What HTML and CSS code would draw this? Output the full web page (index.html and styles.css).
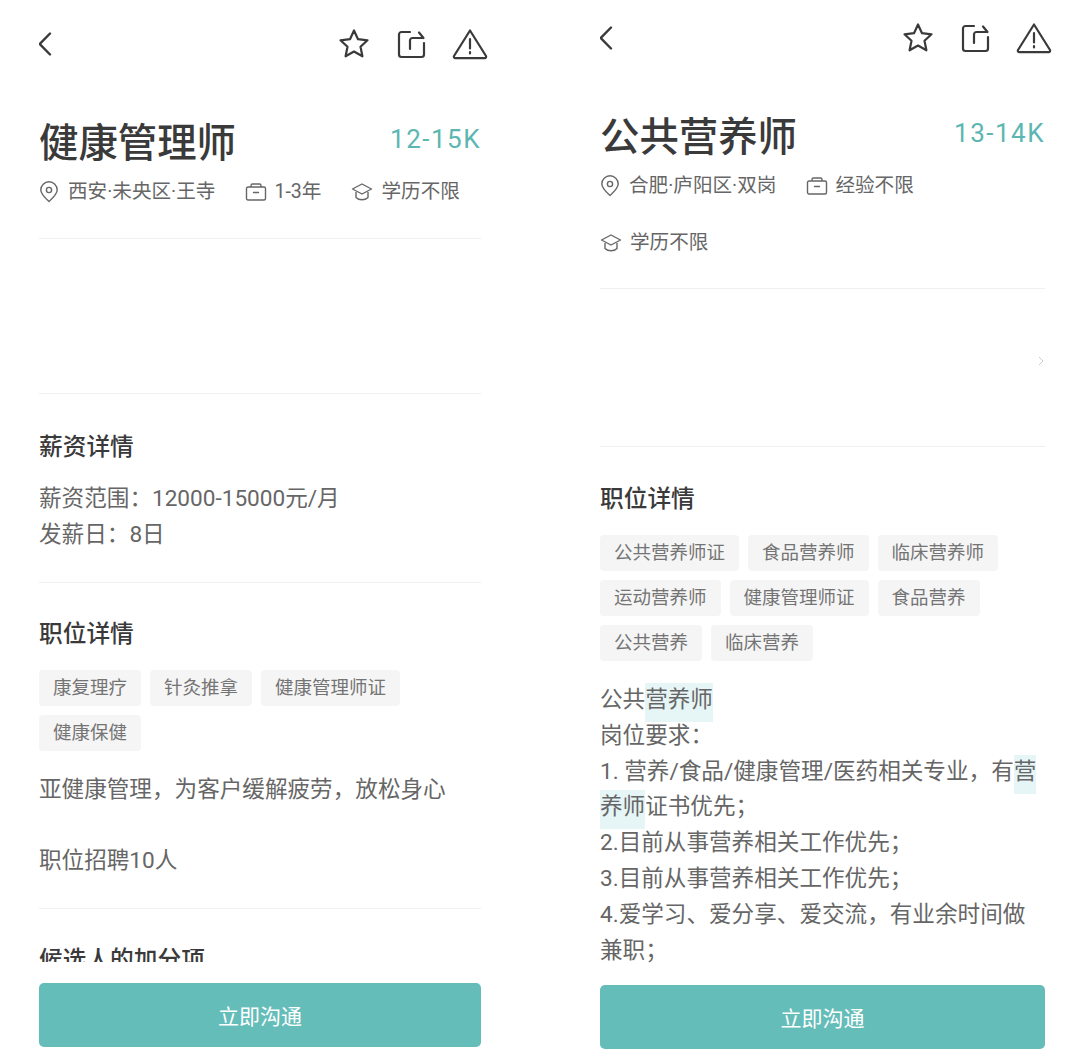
FILE: index.html
```html
<!DOCTYPE html>
<html lang="zh-CN">
<head>
  <meta charset="UTF-8" />
  <title>职位详情</title>
  <link rel="stylesheet" href="styles.css">
</head>
<body>
  <svg class="sprite" width="0" height="0" aria-hidden="true">
    <symbol id="i-back" viewBox="0 0 16 26"><path d="M13 2.500 2.800 13 13 23.500" fill="none" stroke="currentColor" stroke-width="2.400" stroke-linecap="round" stroke-linejoin="round"/></symbol>
    <symbol id="i-star" viewBox="0 0 32 32"><path d="M16 2.500 20 11.200 29.500 12.300 22.500 18.800 24.400 28.300 16 23.500 7.600 28.300 9.500 18.800 2.500 12.300 12 11.200Z" fill="none" stroke="currentColor" stroke-width="2.200" stroke-linejoin="round"/></symbol>
    <symbol id="i-share" viewBox="0 0 30 30"><path d="M14 3H5.500A2.500 2.500 0 0 0 3 5.500v20A2.500 2.500 0 0 0 5.500 28h20a2.500 2.500 0 0 0 2.500-2.500V14M14 20v-8.500A2.500 2.500 0 0 1 16.500 9H27M23 3.500 27.500 9" fill="none" stroke="currentColor" stroke-width="2.200" stroke-linecap="round" stroke-linejoin="round"/></symbol>
    <symbol id="i-warn" viewBox="0 0 36 32"><path d="M18 2.500 34 28a1.500 1.500 0 0 1-1.300 2.200H3.300A1.500 1.500 0 0 1 2 28ZM18 11v9.500M18 24v1.500" fill="none" stroke="currentColor" stroke-width="2.200" stroke-linecap="round" stroke-linejoin="round"/></symbol>
    <symbol id="i-pin" viewBox="0 0 20 22"><path d="M10 20.500C5 16 1.800 12.800 1.800 9a8.200 8.200 0 0 1 16.400 0c0 3.800-3.200 7-8.200 11.500Z" fill="none" stroke="currentColor" stroke-width="1.400" stroke-linejoin="round"/><circle cx="10" cy="9" r="2.600" fill="none" stroke="currentColor" stroke-width="1.400"/></symbol>
    <symbol id="i-bag" viewBox="0 0 22 20"><path d="M6 5V3.500A1.500 1.500 0 0 1 7.500 2h7A1.500 1.500 0 0 1 16 3.500V5M3 5h16a1.500 1.500 0 0 1 1.500 1.500v10A1.500 1.500 0 0 1 19 18H3a1.500 1.500 0 0 1-1.500-1.500v-10A1.500 1.500 0 0 1 3 5ZM8.500 10.500h5" fill="none" stroke="currentColor" stroke-width="1.400" stroke-linecap="round"/></symbol>
    <symbol id="i-cap" viewBox="0 0 22 20"><path d="M11 2 20.500 7 11 12 1.500 7ZM5 10v5.500c1.500 1.500 3.500 2.300 6 2.300s4.500-.8 6-2.300V10" fill="none" stroke="currentColor" stroke-width="1.400" stroke-linejoin="round"/></symbol>
  </svg>

  <div class="screens">
    <section class="phone phone-left">
      <div class="content">
        <nav class="topbar">
          <svg class="icon-back"><use href="#i-back"/></svg>
          <div class="actions">
            <svg class="icon-star"><use href="#i-star"/></svg>
            <svg class="icon-share"><use href="#i-share"/></svg>
            <svg class="icon-warn"><use href="#i-warn"/></svg>
          </div>
        </nav>
        <div class="job-head">
          <h1>健康管理师</h1>
          <span class="salary">12-15K</span>
        </div>
        <div class="meta">
          <span class="meta-item"><svg class="icon-pin"><use href="#i-pin"/></svg>西安·未央区·王寺</span>
          <span class="meta-item"><svg class="icon-bag"><use href="#i-bag"/></svg>1-3年</span>
          <span class="meta-item"><svg class="icon-cap"><use href="#i-cap"/></svg>学历不限</span>
        </div>
        <div class="blank blank-left"></div>
        <div class="block">
          <h2>薪资详情</h2>
          <p class="text">薪资范围<span class="punct">：</span>12000-15000元/月<br>发薪日<span class="punct">：</span>8日</p>
        </div>
        <div class="block">
          <h2>职位详情</h2>
          <div class="tags">
            <span class="tag">康复理疗</span>
            <span class="tag">针灸推拿</span>
            <span class="tag">健康管理师证</span>
            <span class="tag">健康保健</span>
          </div>
          <p class="text">亚健康管理，为客户缓解疲劳，放松身心<br><br>职位招聘10人</p>
        </div>
        <div class="block">
          <h2>候选人的加分项</h2>
        </div>
      </div>
      <button class="chat-btn" type="button">立即沟通</button>
    </section>

    <section class="phone phone-right">
      <div class="content">
        <nav class="topbar">
          <svg class="icon-back"><use href="#i-back"/></svg>
          <div class="actions">
            <svg class="icon-star"><use href="#i-star"/></svg>
            <svg class="icon-share"><use href="#i-share"/></svg>
            <svg class="icon-warn"><use href="#i-warn"/></svg>
          </div>
        </nav>
        <div class="job-head">
          <h1>公共营养师</h1>
          <span class="salary">13-14K</span>
        </div>
        <div class="meta">
          <span class="meta-item"><svg class="icon-pin"><use href="#i-pin"/></svg>合肥·庐阳区·双岗</span>
          <span class="meta-item"><svg class="icon-bag"><use href="#i-bag"/></svg>经验不限</span>
          <span class="meta-item"><svg class="icon-cap"><use href="#i-cap"/></svg>学历不限</span>
        </div>
        <div class="blank blank-right">
          <svg class="chevron" viewBox="0 0 6 10"><path d="M1 1 5 5 1 9" fill="none" stroke="currentColor" stroke-width="1"/></svg>
        </div>
        <div class="block">
          <h2>职位详情</h2>
          <div class="tags">
            <span class="tag">公共营养师证</span>
            <span class="tag">食品营养师</span>
            <span class="tag">临床营养师</span>
            <span class="tag">运动营养师</span>
            <span class="tag">健康管理师证</span>
            <span class="tag">食品营养</span>
            <span class="tag">公共营养</span>
            <span class="tag">临床营养</span>
          </div>
          <p class="text">公共<span class="mark">营养师</span><br>岗位要求<span class="punct">：</span><br>1. 营养/食品/健康管理/医药相关专业，有<span class="mark">营养师</span>证书优先<span class="punct">；</span><br>2.目前从事营养相关工作优先<span class="punct">；</span><br>3.目前从事营养相关工作优先<span class="punct">；</span><br>4.爱学习、爱分享、爱交流，有业余时间做兼职<span class="punct">；</span></p>
        </div>
      </div>
      <button class="chat-btn" type="button">立即沟通</button>
    </section>
  </div>
</body>
</html>
```

FILE: styles.css
```css
:root {
  --teal: #65bdb9;
  --teal-text: #5cb6b1;
  --ink: #383838;
  --gray: #666;
  --line: #f0f0f0;
}

* {
  box-sizing: border-box;
}

html, body {
  height: 100%;
}

body {
  margin: 0;
  overflow: hidden;
  background: #fff;
  color: var(--ink);
  font-family: "Roboto", "Noto Sans CJK SC", sans-serif;
}

.sprite {
  display: block;
  height: 0;
}

.screens {
  display: grid;
  grid-template-columns: 540px 540px;
  height: 1064px;
}

.phone {
  display: flex;
  flex-direction: column;
  height: 1064px;
}

.phone-left {
  padding: 27px 59px 17px 39px;
}

.phone-right {
  padding: 21px 35px 15px 60px;
}

/* the warning icon hangs past the text column, so leave it room inside the clip */
.content {
  flex: 1;
  min-height: 0;
  margin-right: -8px;
  padding-right: 8px;
  overflow: hidden;
}

/* top icons */
.topbar {
  display: flex;
  justify-content: space-between;
  align-items: center;
  height: 34px;
  color: #3a3a3a;
}

.actions {
  display: flex;
  align-items: center;
  gap: 26px;
  margin-right: -7px;
}

.icon-back {
  width: 16px;
  height: 26px;
  margin-left: -2px;
}

.icon-star {
  width: 32px;
  height: 32px;
}

.icon-share {
  width: 30px;
  height: 30px;
}

.icon-warn {
  width: 36px;
  height: 32px;
}

/* title row */
.job-head {
  display: flex;
  justify-content: space-between;
  align-items: flex-start;
  margin-top: 55px;
}

h1 {
  margin: 0;
  font-size: 39.400px;
  font-weight: 500;
  line-height: 56px;
  color: #3a3a3a;
}

.salary {
  margin-top: 6px;
  font-size: 26px;
  line-height: 34px;
  letter-spacing: 1.500px;
  color: var(--teal-text);
}

.meta {
  display: flex;
  flex-wrap: wrap;
  column-gap: 30px;
  row-gap: 21px;
  margin-top: 2px;
  padding-bottom: 28px;
  border-bottom: 1px solid var(--line);
  font-size: 19.600px;
  line-height: 36px;
  color: var(--gray);
}

.phone-right .meta {
  padding-bottom: 27px;
}

.meta-item {
  display: flex;
  align-items: center;
  gap: 8px;
}

.meta-item:nth-child(1) {
  gap: 9px;
}

.meta-item:nth-child(2) {
  gap: 7px;
}

.icon-pin {
  width: 20px;
  height: 22px;
}

.icon-bag,
.icon-cap {
  width: 22px;
  height: 20px;
}

.blank {
  display: flex;
  justify-content: flex-end;
  align-items: center;
  border-bottom: 1px solid var(--line);
}

.blank-left {
  height: 155px;
}

.blank-right {
  height: 158px;
}

.chevron {
  width: 6px;
  height: 10px;
  margin-right: 1px;
  margin-bottom: 14px;
  color: #ccc;
}

/* sections */
.block {
  padding-top: 33px;
  padding-bottom: 29px;
  border-bottom: 1px solid var(--line);
}

.blank-left + .block {
  padding-top: 35px;
}

.blank-right + .block {
  padding-top: 34px;
}

h2 {
  margin: 0;
  font-size: 23.700px;
  font-weight: 500;
  line-height: 36px;
  color: #3a3a3a;
}

.text {
  margin: 16px 0 0;
  font-size: 22.600px;
  line-height: 35.800px;
  color: var(--gray);
}

/* colon and semicolon sit centred in the cell in the original */
.punct {
  font-family: "Noto Sans CJK JP", sans-serif;
  line-height: 1;
}

.tags {
  display: flex;
  flex-wrap: wrap;
  gap: 9px;
  margin-top: 18px;
}

.tag {
  height: 36px;
  padding: 0 14px;
  border-radius: 4px;
  background: #f5f5f5;
  font-size: 18.500px;
  line-height: 36px;
  color: #747474;
}

.tags + .text {
  margin-top: 21px;
}

.mark {
  padding: 3px 0 9px;
  background: #e6f5f6;
}

.chat-btn {
  flex-shrink: 0;
  width: 100%;
  height: 64px;
  margin-top: 21px;
  border: none;
  border-radius: 5px;
  background: var(--teal);
  color: #fff;
  font-family: inherit;
  font-size: 21px;
  font-weight: 400;
}
```
